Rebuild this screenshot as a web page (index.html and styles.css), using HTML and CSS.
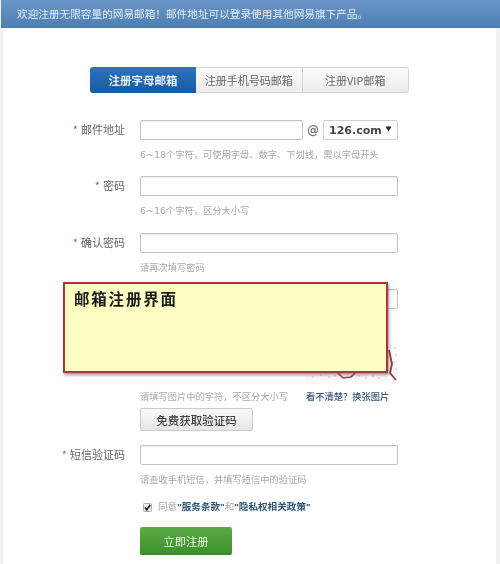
FILE: index.html
```html
<!DOCTYPE html>
<html lang="zh-CN">
<head>
<meta charset="utf-8">
<title>邮箱注册</title>
<link rel="stylesheet" href="styles.css">
</head>
<body>
<div class="page">
  <div class="banner">欢迎注册无限容量的网易邮箱！邮件地址可以登录使用其他网易旗下产品。</div>
  <div class="tabs">
    <div class="tab tab-active">注册字母邮箱</div>
    <div class="tab">注册手机号码邮箱</div>
    <div class="tab">注册VIP邮箱</div>
  </div>
  <div class="form">
    <div class="row">
      <div class="label"><span class="star">*</span>邮件地址</div>
      <div class="control">
        <div class="email-line">
          <div class="input input-email"></div>
          <span class="at">@</span>
          <div class="domain"><span>126.com</span><svg class="caret" width="7" height="6" viewBox="0 0 7 6"><path d="M0.5 0.5H6.5L3.5 5.5Z" fill="#222"/></svg></div>
        </div>
        <div class="hint"><span class="num">6~18</span>个字符，可使用字母、数字、下划线，需以字母开头</div>
      </div>
    </div>
    <div class="row row-wide">
      <div class="label"><span class="star">*</span>密码</div>
      <div class="control">
        <div class="input"></div>
        <div class="hint"><span class="num">6~16</span>个字符，区分大小写</div>
      </div>
    </div>
    <div class="row">
      <div class="label"><span class="star">*</span>确认密码</div>
      <div class="control">
        <div class="input"></div>
        <div class="hint">请再次填写密码</div>
      </div>
    </div>
    <div class="row row-tight">
      <div class="label"></div>
      <div class="control">
        <div class="input"></div>
        <svg class="captcha" width="93" height="40" viewBox="0 0 93 40">
          <rect width="93" height="40" fill="#fbf9f9"/>
          <g fill="#c9bcbc">
            <circle cx="8" cy="33" r="0.8"/><circle cx="16" cy="31" r="0.8"/><circle cx="24" cy="33" r="0.8"/><circle cx="30" cy="32" r="0.8"/>
            <circle cx="54" cy="32" r="0.8"/><circle cx="61" cy="34" r="0.8"/><circle cx="68" cy="32" r="0.8"/><circle cx="74" cy="34" r="0.8"/>
            <circle cx="90" cy="4" r="0.8"/><circle cx="91" cy="11" r="0.8"/><circle cx="89" cy="18" r="0.8"/><circle cx="91" cy="25" r="0.8"/>
          </g>
          <path d="M33 29L38 34L46 33L50 29" fill="none" stroke="#8f4a52" stroke-width="1.6"/>
          <path d="M84 6L87 20L85 29L91 36" fill="none" stroke="#8f3c44" stroke-width="1.8"/>
        </svg>
        <div class="captcha-foot">
          <span class="hint-inline">请填写图片中的字符，不区分大小写</span>
          <span class="swap">看不清楚？换张图片</span>
        </div>
        <div class="sms-btn">免费获取验证码</div>
      </div>
    </div>
    <div class="row">
      <div class="label"><span class="star">*</span>短信验证码</div>
      <div class="control">
        <div class="input"></div>
        <div class="hint">请查收手机短信，并填写短信中的验证码</div>
      </div>
    </div>
    <div class="agree">
      <svg class="check" width="9" height="9" viewBox="0 0 9 9"><rect x="0.5" y="0.5" width="8" height="8" rx="1" fill="#eee" stroke="#aaa"/><path d="M2 4.5L3.8 6.8L7.2 1.8" fill="none" stroke="#222" stroke-width="1.6"/></svg>
      <span>同意<b>"服务条款"</b>和<b>"隐私权相关政策"</b></span>
    </div>
    <div class="submit">立即注册</div>
  </div>
  <div class="note">邮箱注册界面</div>
</div>
</body>
</html>
```

FILE: styles.css
```css
* { box-sizing: border-box; }
html, body { margin: 0; background: #fff; }
body {
  font-family: "Noto Sans CJK SC", "Liberation Sans", sans-serif;
  color: #666;
}
.page {
  position: relative;
  width: 500px;
  height: 564px;
  overflow: hidden;
  padding: 0 4px 0 3px;
  background: linear-gradient(to right, #f1f1f1 0, #f1f1f1 3px, #fff 3px, #fff 496px, #f1f1f1 496px);
  filter: blur(0.35px);
}
.banner {
  height: 28px;
  margin: 0 -4px 0 -2px;
  padding-left: 16px;
  font-size: 10.65px;
  line-height: 28px;
  color: #e4edf6;
  white-space: nowrap;
  background: linear-gradient(to bottom, #6b96cb, #4d7eae);
}
.tabs {
  display: flex;
  width: 319px;
  height: 26px;
  margin: 39px 0 27px 87px;
  font-size: 11px;
  line-height: 24px;
  text-align: center;
  color: #666;
  background: linear-gradient(to bottom, #fbfbfb, #ececec);
  border: 1px solid #d4d4d4;
  border-radius: 3px;
}
.tab { flex: 1; border-right: 1px solid #d4d4d4; }
.tab:last-child { border-right: 0; }
.tab-active {
  flex: none;
  width: 106px;
  margin: -1px 0 -1px -1px;
  font-size: 11.5px;
  font-weight: 700;
  line-height: 26px;
  color: #e6effa;
  background: linear-gradient(to bottom, #2a74bf, #195a9f);
  border: 0;
  border-radius: 3px 0 0 3px;
}
.form { display: flex; flex-direction: column; }
.row {
  display: grid;
  grid-template-columns: 122px 258px;
  column-gap: 15px;
  margin-bottom: 15px;
}
.row-wide { margin-bottom: 16px; }
.row-tight { margin-bottom: 14px; }
.label {
  font-size: 11px;
  line-height: 19px;
  text-align: right;
  color: #666;
}
.star { margin-right: 3px; color: #b5575c; }
.input {
  height: 20px;
  background: #fff;
  border: 1px solid #c4c4c4;
  border-radius: 2px;
  box-shadow: inset 0 1px 1px #eee;
}
.email-line { display: flex; align-items: center; }
.input-email { width: 163px; }
.at {
  width: 20px;
  font-family: "DejaVu Sans", sans-serif;
  font-size: 12px;
  font-weight: 700;
  line-height: 20px;
  text-align: center;
  color: #777;
}
.domain {
  display: flex;
  align-items: center;
  justify-content: space-between;
  width: 75px;
  height: 20px;
  padding: 0 5px 0 5px;
  font-family: "DejaVu Sans", sans-serif;
  font-size: 11px;
  font-weight: 700;
  color: #444;
  background: #fff;
  border: 1px solid #d0d0d0;
  border-radius: 2px;
}
.caret { margin-top: -3px; }
.hint {
  height: 14px;
  margin-top: 7px;
  font-size: 9.25px;
  line-height: 14px;
  color: #a8a8a8;
  white-space: nowrap;
}
.num { font-family: "DejaVu Sans", sans-serif; font-size: 9.5px; }
.captcha { display: block; margin: 35px 0 0 165px; }
.captcha-foot {
  display: flex;
  height: 14px;
  margin-top: 5px;
  font-size: 9.25px;
  line-height: 14px;
  white-space: nowrap;
}
.hint-inline { width: 166px; color: #a8a8a8; }
.swap { color: #37597c; font-weight: 500; }
.sms-btn {
  width: 113px;
  height: 23px;
  margin-top: 5px;
  font-size: 11.5px;
  font-weight: 500;
  line-height: 22px;
  text-align: center;
  color: #444;
  background: linear-gradient(to bottom, #fafafa, #e6e6e6);
  border: 1px solid #cacaca;
  border-radius: 2px;
}
.agree {
  display: flex;
  align-items: center;
  gap: 6px;
  height: 14px;
  margin: -1px 0 13px 140px;
  font-family: "Liberation Sans", "Noto Sans CJK SC", sans-serif;
  font-size: 9.6px;
  line-height: 14px;
  color: #a8a8a8;
  white-space: nowrap;
}
.agree b { font-weight: 700; color: #2f5577; }
.check { flex: none; }
.submit {
  width: 92px;
  height: 28px;
  margin-left: 137px;
  font-size: 11.25px;
  line-height: 28px;
  text-align: center;
  color: #e8f5e2;
  background: linear-gradient(to bottom, #5bab45, #3a9028);
  border-radius: 2px;
}
.note {
  position: absolute;
  left: 63px;
  top: 282px;
  width: 325px;
  height: 91px;
  padding: 2px 0 0 9px;
  font-size: 15.5px;
  font-weight: 700;
  letter-spacing: 1.8px;
  line-height: 24px;
  color: #1a1a1a;
  background: #fefdc4;
  border: 2px solid #a33a3c;
  box-shadow: 1px 2px 3px rgba(80, 60, 60, 0.55);
}
```
